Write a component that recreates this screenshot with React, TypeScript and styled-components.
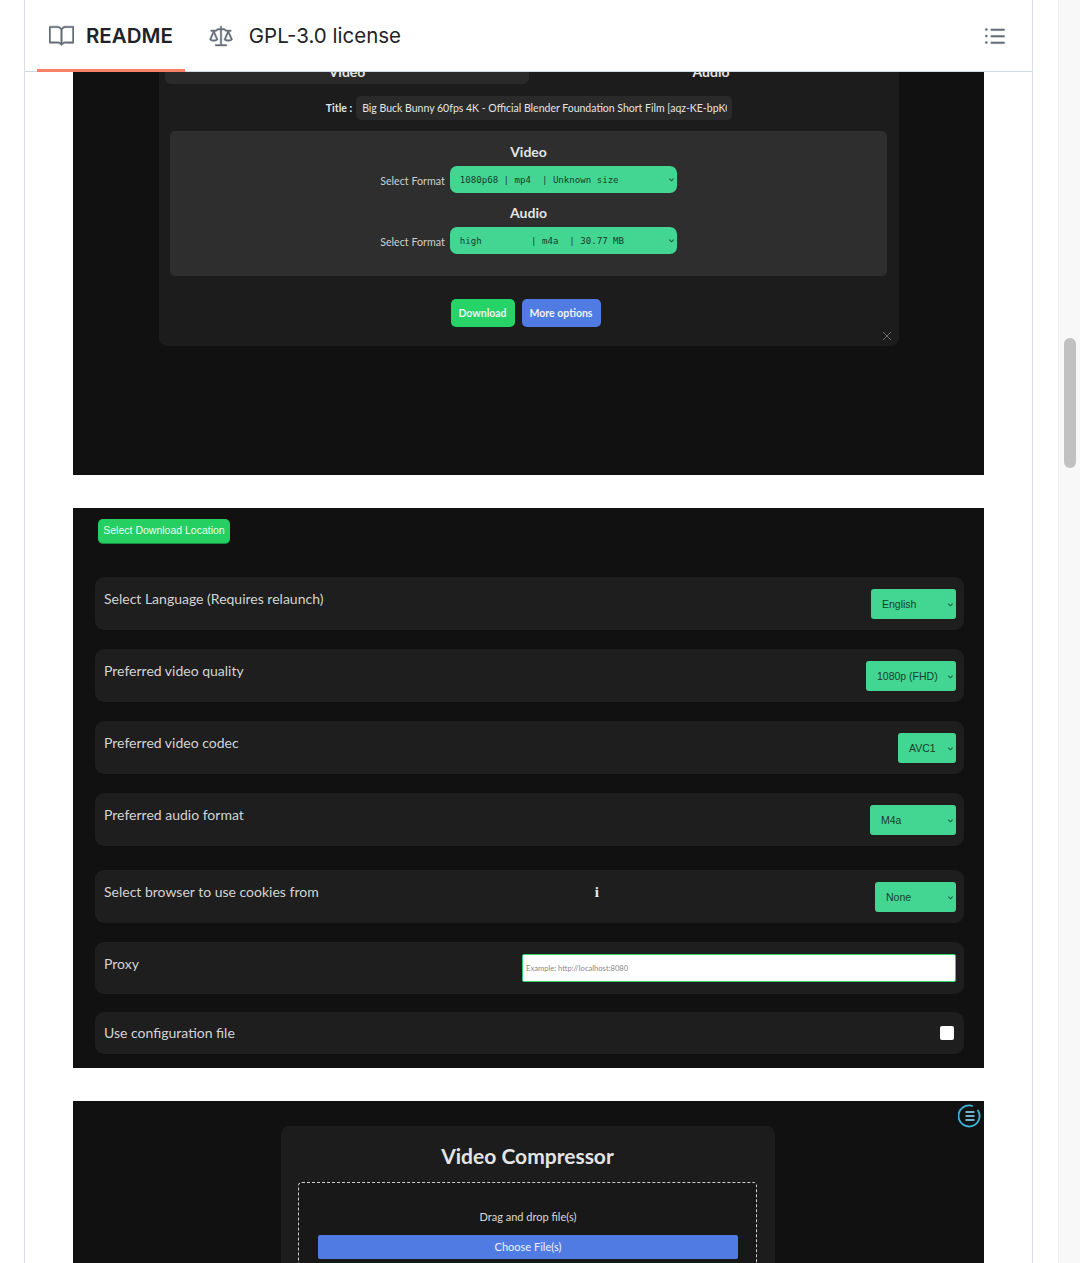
import React from 'react';
import styled, { createGlobalStyle } from 'styled-components';
import { GoBook, GoLaw, GoListUnordered } from 'react-icons/go';

const GlobalStyle = createGlobalStyle`
  html, body {
    margin: 0;
    background: #fff;
  }
  * {
    box-sizing: border-box;
  }
`;

const Page = styled.div`
  display: flex;
  height: 1263px;
  overflow: hidden;
  background: #fff;
`;

const Article = styled.div`
  width: 1009px;
  margin-left: 24px;
  border-left: 1px solid #d8dee4;
  border-right: 1px solid #d8dee4;
`;

const Track = styled.div`
  width: 22px;
  margin-left: 25px;
  padding: 338px 5px 0;
  background: #f8f8f9;
  border-left: 1px solid #eeeeef;
`;

const Thumb = styled.div`
  width: 12px;
  height: 130px;
  border-radius: 6px;
  background: #c1c1c1;
`;

const TabBar = styled.div`
  display: flex;
  align-items: stretch;
  height: 72px;
  padding: 0 24px 0 12px;
  border-bottom: 1px solid #d0d7de;
  font-family: Inter, "Liberation Sans", sans-serif;
  font-size: 20.5px;
  color: #1f2328;
`;

const Tab = styled.div<{ $active?: boolean; $gap: number }>`
  display: flex;
  align-items: center;
  gap: ${p => p.$gap}px;
  padding: 2px 12px 0;
  margin-bottom: -1px;
  margin-right: 12px;
  border-bottom: 3px solid ${p => (p.$active ? '#f78166' : 'transparent')};
  font-weight: ${p => (p.$active ? 600 : 400)};

  svg {
    color: #656d76;
    flex-shrink: 0;
    stroke: currentColor;
    stroke-width: 0.4px;
  }
`;

const TocButton = styled.div`
  display: flex;
  align-items: center;
  margin-left: auto;
  color: #656d76;

  svg {
    stroke: currentColor;
    stroke-width: 0.5px;
  }
`;

const Body = styled.div`
  padding: 0 48px;
  font-family: Lato, "Noto Sans", sans-serif;
`;

const Shot = styled.div<{ $height: number }>`
  position: relative;
  display: flex;
  flex-direction: column;
  height: ${p => p.$height}px;
  margin-bottom: 33px;
  overflow: hidden;
  background: #111;
  color: #e4e4e4;
`;

/* first screenshot */

const DownloadCard = styled.div`
  position: relative;
  flex-shrink: 0;
  width: 740px;
  margin: -18px auto 0 86px;
  padding: 6px 0 19px;
  border-radius: 8px;
  background: #1c1c1c;
`;

const ModeTabs = styled.div`
  display: grid;
  grid-template-columns: 364px 364px;
  padding: 0 6px;
`;

const ModeTab = styled.div<{ $active?: boolean }>`
  height: 24px;
  border-radius: 6px;
  background: ${p => (p.$active ? '#2a2a2a' : 'transparent')};
  font-size: 14px;
  font-weight: 700;
  line-height: 24px;
  text-align: center;
`;

const TitleRow = styled.div`
  display: flex;
  justify-content: center;
  align-items: center;
  gap: 4px;
  margin-top: 12px;
`;

const TitleLabel = styled.span`
  font-size: 10.5px;
  font-weight: 700;
  line-height: 22px;
  white-space: pre;
`;

const TitleField = styled.div`
  width: 376px;
  height: 24px;
  padding-left: 6px;
  overflow: hidden;
  border-right: 5px solid #2a2a2a;
  border-radius: 5px;
  background: #2a2a2a;
  font-size: 10.5px;
  line-height: 24px;
  white-space: nowrap;
`;

const FormatPanel = styled.div`
  margin: 11px 12px 0 11px;
  padding: 12px 0 22px;
  border-radius: 5px;
  background: #2e2e2e;
`;

const FormatHeading = styled.div<{ $top?: number }>`
  margin: ${p => p.$top ?? 0}px 0 5px;
  font-size: 14px;
  font-weight: 700;
  line-height: 18px;
  text-align: center;
`;

const FormatRow = styled.div`
  display: flex;
  justify-content: center;
  align-items: center;
  gap: 5px;
`;

const FormatLabel = styled.span`
  margin-top: 2px;
  font-size: 10.7px;
  color: #cfcfcf;
`;

const Picker = styled.div<{ $width: number; $height: number; $radius: number; $pad: number }>`
  display: flex;
  align-items: center;
  justify-content: space-between;
  flex-shrink: 0;
  width: ${p => p.$width}px;
  height: ${p => p.$height}px;
  padding: 0 2px 0 ${p => p.$pad}px;
  border-radius: ${p => p.$radius}px;
  background: #43d692;
  color: #173d2b;
`;

const MonoValue = styled.span`
  font-family: "DejaVu Sans Mono", "Liberation Mono", monospace;
  font-size: 9.1px;
  white-space: pre;
`;

const PlainValue = styled.span`
  font-family: "Liberation Sans", Arial, sans-serif;
  font-size: 10.5px;
`;

const ActionRow = styled.div`
  display: flex;
  justify-content: center;
  gap: 7px;
  margin-top: 23px;
  padding-right: 7px;
`;

const ActionButton = styled.div<{ $color: string; $width: number }>`
  width: ${p => p.$width}px;
  height: 28px;
  border-radius: 5px;
  background: ${p => p.$color};
  color: #f2f2f2;
  font-size: 10.5px;
  font-weight: 700;
  line-height: 28px;
  text-align: center;
`;

const CloseMark = styled.svg`
  position: absolute;
  right: 7px;
  bottom: 5px;
  width: 10px;
  height: 10px;
`;

/* settings screenshot */

const SettingsBody = styled.div`
  display: flex;
  flex-direction: column;
  padding: 11px 20px 14px 22px;
`;

const LocationButton = styled.div`
  align-self: flex-start;
  width: 132px;
  height: 25px;
  margin: 0 0 33px 3px;
  border-radius: 5px;
  border-bottom: 1px solid #178a43;
  background: #25cf62;
  color: #eafff1;
  font-family: "Liberation Sans", Arial, sans-serif;
  font-size: 10.5px;
  line-height: 23px;
  text-align: center;
`;

const SettingRow = styled.div<{ $height: number; $top: number; $center?: boolean }>`
  display: flex;
  justify-content: space-between;
  align-items: ${p => (p.$center ? 'center' : 'flex-start')};
  height: ${p => p.$height}px;
  margin-top: ${p => p.$top}px;
  padding: ${p => (p.$center ? '0' : '12px')} 8px ${p => (p.$center ? '0' : '12px')} 9px;
  border-radius: 9px;
  background: #1e1e1e;
`;

const SettingLabel = styled.span`
  font-size: 14px;
  line-height: 20px;
  color: #d4d4d4;
`;

const InfoMark = styled.span`
  font-family: "Liberation Serif", serif;
  font-size: 15px;
  font-weight: 700;
  line-height: 20px;
  color: #e8e8e8;
`;

const ProxyInput = styled.div`
  width: 434px;
  height: 28px;
  padding-left: 3px;
  border: 1px solid #2fd070;
  border-radius: 2px;
  background: #fff;
  color: #8a8a8a;
  font-size: 7.6px;
  line-height: 26px;
`;

const CheckBox = styled.div`
  width: 14px;
  height: 14px;
  margin-right: 2px;
  border-radius: 2px;
  background: #fff;
`;

/* compressor screenshot */

const MenuMark = styled.svg`
  position: absolute;
  top: 3px;
  right: 2px;
  width: 24px;
  height: 24px;
`;

const CompressorCard = styled.div`
  flex-shrink: 0;
  width: 494px;
  margin: 25px 0 0 208px;
  padding: 15px 18px 20px 17px;
  border-radius: 8px;
  background: #1c1c1c;
`;

const CompressorTitle = styled.div`
  margin-bottom: 11px;
  font-size: 21px;
  font-weight: 700;
  line-height: 30px;
  text-align: center;
`;

const DropZone = styled.div`
  padding: 24px 18px 40px 19px;
  border: 1px dashed #cfcfcf;
  border-radius: 4px;
  background: #181818;
`;

const DropText = styled.div`
  margin-bottom: 8px;
  font-size: 11px;
  line-height: 20px;
  text-align: center;
  color: #d8d8d8;
`;

const ChooseButton = styled.div`
  height: 24px;
  border-radius: 2px;
  background: #4f7be3;
  color: #eef2ff;
  font-size: 11px;
  line-height: 24px;
  text-align: center;
`;

const Chevron: React.FC = () => (
  <svg width="7" height="7" viewBox="0 0 8 8" fill="none" stroke="#1f5a3e" strokeWidth="1.2">
    <path d="M1.5 3 4 5.5 6.5 3" />
  </svg>
);

const settings = [
  { label: 'Select Language (Requires relaunch)', value: 'English', width: 85, height: 53, top: 0 },
  { label: 'Preferred video quality', value: '1080p (FHD)', width: 90, height: 53, top: 0 },
  { label: 'Preferred video codec', value: 'AVC1', width: 58, height: 53, top: 0 },
  { label: 'Preferred audio format', value: 'M4a', width: 86, height: 53, top: 0 },
  { label: 'Select browser to use cookies from', value: 'None', width: 81, height: 53, top: 5, info: true },
];

const App: React.FC = () => {
  return (
    <Page>
      <GlobalStyle />
      <Article>
        <TabBar>
          <Tab $active $gap={12}>
            <GoBook size={25} />
            README
          </Tab>
          <Tab $gap={16}>
            <GoLaw size={24} />
            GPL-3.0 license
          </Tab>
          <TocButton>
            <GoListUnordered size={26} />
          </TocButton>
        </TabBar>
        <Body>
          <Shot $height={403}>
            <DownloadCard>
              <ModeTabs>
                <ModeTab $active>Video</ModeTab>
                <ModeTab>Audio</ModeTab>
              </ModeTabs>
              <TitleRow>
                <TitleLabel>Title :</TitleLabel>
                <TitleField>Big Buck Bunny 60fps 4K - Official Blender Foundation Short Film [aqz-KE-bpKQ</TitleField>
              </TitleRow>
              <FormatPanel>
                <FormatHeading>Video</FormatHeading>
                <FormatRow>
                  <FormatLabel>Select Format</FormatLabel>
                  <Picker $width={227} $height={27} $radius={7} $pad={10}>
                    <MonoValue>1080p68 | mp4  | Unknown size</MonoValue>
                    <Chevron />
                  </Picker>
                </FormatRow>
                <FormatHeading $top={11}>Audio</FormatHeading>
                <FormatRow>
                  <FormatLabel>Select Format</FormatLabel>
                  <Picker $width={227} $height={27} $radius={7} $pad={10}>
                    <MonoValue>high         | m4a  | 30.77 MB</MonoValue>
                    <Chevron />
                  </Picker>
                </FormatRow>
              </FormatPanel>
              <ActionRow>
                <ActionButton $color="#25d366" $width={64}>Download</ActionButton>
                <ActionButton $color="#4f7be3" $width={79}>More options</ActionButton>
              </ActionRow>
              <CloseMark viewBox="0 0 10 10" fill="none" stroke="#6e6e6e" strokeWidth="1">
                <path d="M1 1l8 8M9 1l-8 8" />
              </CloseMark>
            </DownloadCard>
          </Shot>

          <Shot $height={560}>
            <SettingsBody>
              <LocationButton>Select Download Location</LocationButton>
              {settings.map((s, i) => (
                <SettingRow key={s.label} $height={s.height} $top={i === 0 ? 0 : 19 + s.top}>
                  <SettingLabel>{s.label}</SettingLabel>
                  {s.info && <InfoMark>i</InfoMark>}
                  <Picker $width={s.width} $height={30} $radius={3} $pad={11}>
                    <PlainValue>{s.value}</PlainValue>
                    <Chevron />
                  </Picker>
                </SettingRow>
              ))}
              <SettingRow $height={52} $top={19}>
                <SettingLabel>Proxy</SettingLabel>
                <ProxyInput>Example: http://localhost:8080</ProxyInput>
              </SettingRow>
              <SettingRow $height={42} $top={18} $center>
                <SettingLabel>Use configuration file</SettingLabel>
                <CheckBox />
              </SettingRow>
            </SettingsBody>
          </Shot>

          <Shot $height={300}>
            <MenuMark viewBox="0 0 24 24" fill="none" stroke="#3db4d6">
              <path d="M20 6.5A10.5 10.5 0 1 1 14 1.9" strokeWidth="1.8" strokeLinecap="round" />
              <path d="M7.5 8h9M7.5 12h9M7.5 16h9" strokeWidth="1.8" stroke="#6fb4c8" />
            </MenuMark>
            <CompressorCard>
              <CompressorTitle>Video Compressor</CompressorTitle>
              <DropZone>
                <DropText>Drag and drop file(s)</DropText>
                <ChooseButton>Choose File(s)</ChooseButton>
              </DropZone>
            </CompressorCard>
          </Shot>
        </Body>
      </Article>
      <Track>
        <Thumb />
      </Track>
    </Page>
  );
};

export default App;
